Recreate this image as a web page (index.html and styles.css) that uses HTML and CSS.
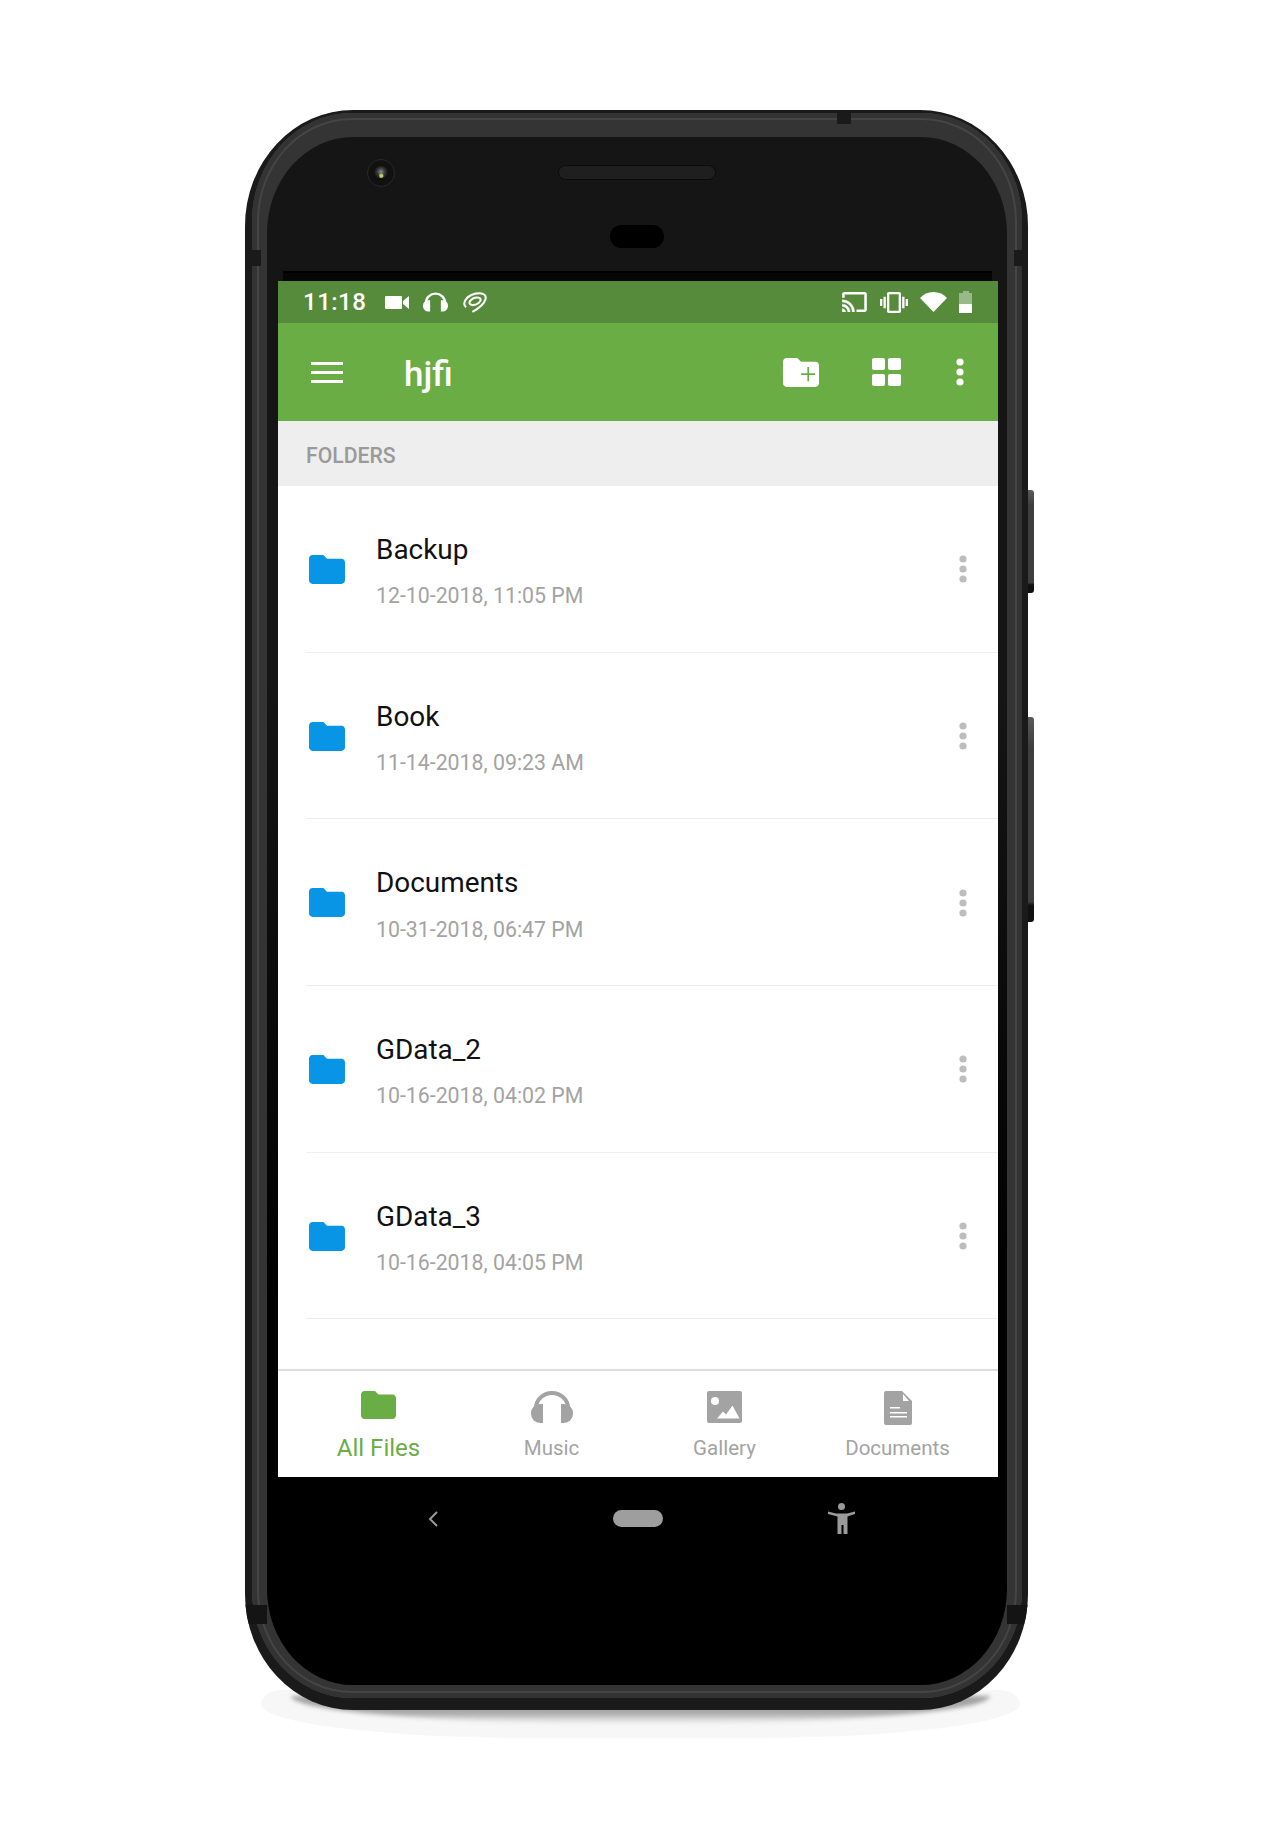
FILE: index.html
```html
<!DOCTYPE html>
<html lang="en">
<head>
    <meta charset="UTF-8">
    <title>hjfi</title>
    <link rel="stylesheet" href="styles.css">
</head>
<body>
    <svg class="icon-defs" width="0" height="0">
        <symbol id="folder" viewBox="2 4 20 16">
            <path d="M10 4H4c-1.1 0-2 .9-2 2v12c0 1.1.9 2 2 2h16c1.1 0 2-.9 2-2V8c0-1.1-.9-2-2-2h-8l-2-2z"/>
        </symbol>
        <symbol id="headset" viewBox="0 0 42 32">
            <path d="M5 20v-3a16 15 0 0 1 32 0v3" fill="none" stroke="currentColor" stroke-width="4"/>
            <path d="M12 13v19H9a9 9 0 0 1-9-9v-1a9 9 0 0 1 9-9z"/>
            <path d="M30 13v19h3a9 9 0 0 0 9-9v-1a9 9 0 0 0-9-9z"/>
        </symbol>
        <symbol id="dots" viewBox="0 0 8 28">
            <circle cx="4" cy="4" r="3.6"/>
            <circle cx="4" cy="14" r="3.6"/>
            <circle cx="4" cy="24" r="3.6"/>
        </symbol>
    </svg>

    <div class="device">
        <div class="floor-shadow"></div>
        <div class="side-btn side-btn-power"></div>
        <div class="side-btn side-btn-volume"></div>

        <div class="phone">
            <div class="frame">
                <div class="seam seam-top"></div>
                <div class="seam seam-left"></div>
                <div class="seam seam-right"></div>
                <div class="seam seam-left-low"></div>
                <div class="seam seam-right-low"></div>

                <div class="bezel">
                    <div class="camera"><div class="lens"></div></div>
                    <div class="speaker"></div>
                    <div class="sensor"></div>
                    <div class="screen-edge"></div>

                    <div class="screen">
                        <div class="statusbar">
                            <span class="clock">11:18</span>
                            <svg class="st-video" viewBox="0 0 24 13" width="24" height="13">
                                <rect width="17" height="13" rx="1"/>
                                <path d="M18 5l6-5v13l-6-5z"/>
                            </svg>
                            <svg class="st-headset"><use href="#headset"/></svg>
                            <svg class="st-swirl" viewBox="0 0 24 20" width="25" height="21">
                                <path d="M4 14.500C-1 11 5 3 13 1.500c6-1.100 11 .5 9.500 5.500-1.300 4.500-7 9-12.500 12"/>
                                <path d="M9.500 12.500C4 11 9 5.500 14.500 5.200c4-.2 4.500 3 1.500 5.300-2 1.500-4.500 2.200-6.500 2"/>
                            </svg>
                            <div class="status-right">
                                <svg class="st-cast" viewBox="1 3 22 18" width="25" height="20">
                                    <path d="M21 3H3c-1.100 0-2 .9-2 2v3h2V5h18v14h-7v2h7c1.100 0 2-.9 2-2V5c0-1.100-.9-2-2-2zM1 18v3h3c0-1.660-1.340-3-3-3zm0-4v2c2.760 0 5 2.240 5 5h2c0-3.870-3.130-7-7-7zm0-4v2c4.970 0 9 4.030 9 9h2c0-6.080-4.930-11-11-11z"/>
                                </svg>
                                <svg class="st-vibrate" viewBox="0 3 24 18" width="28" height="21">
                                    <path d="M0 15h2V9H0v6zm3 2h2V7H3v10zm19-8v6h2V9h-2zm-3 8h2V7h-2v10zM16.500 3h-9C6.670 3 6 3.670 6 4.500v15c0 .83.67 1.500 1.500 1.500h9c.83 0 1.500-.67 1.500-1.500v-15c0-.83-.67-1.500-1.500-1.500zM16 19H8V5h8v14z"/>
                                </svg>
                                <svg class="st-wifi" viewBox="0 0 27 20" width="27" height="20">
                                    <path d="M13.500 20L0 6c3.500-4 8-6 13.500-6S23.500 2 27 6z"/>
                                </svg>
                                <div class="battery">
                                    <div class="battery-nub"></div>
                                    <div class="battery-empty"></div>
                                    <div class="battery-level"></div>
                                </div>
                            </div>
                        </div>

                        <div class="toolbar">
                            <div class="hamburger"><span></span><span></span><span></span></div>
                            <div class="title">hjfi</div>
                            <svg class="tb-newfolder" viewBox="2 4 20 16">
                                <use href="#folder" x="2" y="4" width="20" height="16"/>
                                <path d="M16 9v7.800M12.100 12.900h7.800" fill="none" stroke="#6aad45" stroke-width="0.9"/>
                            </svg>
                            <div class="tb-grid"><span></span><span></span><span></span><span></span></div>
                            <svg class="tb-more"><use href="#dots"/></svg>
                        </div>

                        <div class="section-head">FOLDERS</div>

                        <div class="list">
                            <div class="row">
                                <svg class="row-icon"><use href="#folder"/></svg>
                                <div class="row-text">
                                    <div class="row-name">Backup</div>
                                    <div class="row-date">12-10-2018, 11:05 PM</div>
                                </div>
                                <svg class="row-more"><use href="#dots"/></svg>
                            </div>
                            <div class="row">
                                <svg class="row-icon"><use href="#folder"/></svg>
                                <div class="row-text">
                                    <div class="row-name">Book</div>
                                    <div class="row-date">11-14-2018, 09:23 AM</div>
                                </div>
                                <svg class="row-more"><use href="#dots"/></svg>
                            </div>
                            <div class="row">
                                <svg class="row-icon"><use href="#folder"/></svg>
                                <div class="row-text">
                                    <div class="row-name">Documents</div>
                                    <div class="row-date">10-31-2018, 06:47 PM</div>
                                </div>
                                <svg class="row-more"><use href="#dots"/></svg>
                            </div>
                            <div class="row">
                                <svg class="row-icon"><use href="#folder"/></svg>
                                <div class="row-text">
                                    <div class="row-name">GData_2</div>
                                    <div class="row-date">10-16-2018, 04:02 PM</div>
                                </div>
                                <svg class="row-more"><use href="#dots"/></svg>
                            </div>
                            <div class="row">
                                <svg class="row-icon"><use href="#folder"/></svg>
                                <div class="row-text">
                                    <div class="row-name">GData_3</div>
                                    <div class="row-date">10-16-2018, 04:05 PM</div>
                                </div>
                                <svg class="row-more"><use href="#dots"/></svg>
                            </div>
                        </div>

                        <div class="tabs">
                            <div class="tab tab-active">
                                <div class="tab-icon"><svg class="tab-folder"><use href="#folder"/></svg></div>
                                <div class="tab-label">All Files</div>
                            </div>
                            <div class="tab">
                                <div class="tab-icon"><svg class="tab-headset"><use href="#headset"/></svg></div>
                                <div class="tab-label">Music</div>
                            </div>
                            <div class="tab">
                                <div class="tab-icon">
                                    <svg viewBox="0 0 35 32" width="35" height="32">
                                        <rect width="35" height="32" rx="2"/>
                                        <circle cx="8" cy="10" r="4" fill="#fff"/>
                                        <path d="M10 27.500l6-7 3 3 6.500-9 7 13z" fill="#fff"/>
                                    </svg>
                                </div>
                                <div class="tab-label">Gallery</div>
                            </div>
                            <div class="tab">
                                <div class="tab-icon">
                                    <svg viewBox="0 0 28 34" width="28" height="34">
                                        <path d="M2 0h16l10 10v22a2 2 0 0 1-2 2H2a2 2 0 0 1-2-2V2a2 2 0 0 1 2-2z"/>
                                        <path d="M19 3l6 7h-6z" fill="#fff"/>
                                        <path d="M6 16h10v1.500H6zM6 21h17v1.500H6zM6 25h17v1.500H6z" fill="#fff"/>
                                    </svg>
                                </div>
                                <div class="tab-label">Documents</div>
                            </div>
                        </div>
                    </div>

                    <div class="navbar">
                        <svg class="nav-back" viewBox="0 0 10 16" width="10" height="16">
                            <path d="M9 1L2 8l7 7" fill="none" stroke="#9a9a9a" stroke-width="2"/>
                        </svg>
                        <div class="nav-home"></div>
                        <svg class="nav-a11y" viewBox="0 0 27 31" width="27" height="31">
                            <circle cx="13.500" cy="3.500" r="3.500"/>
                            <path d="M0 8.500l8 2h11l8-2v2.500l-7.500 2.500V31h-4v-9h-2v9h-4V13.500L0 11z"/>
                        </svg>
                    </div>
                </div>
            </div>
        </div>
    </div>
</body>
</html>
```

FILE: styles.css
```css
body {
    margin: 0;
    padding: 110px 0 0 245px;
    background-color: #ffffff;
    font-family: Roboto, sans-serif;
}

.icon-defs {
    display: block;
    height: 0;
}

.device {
    position: relative;
    width: 783px;
    height: 1640px;
}

.floor-shadow {
    position: absolute;
    left: 16px;
    right: 8px;
    top: 1580px;
    height: 48px;
    border-radius: 30px 30px 50% 50% / 20px 20px 100% 100%;
    background: #f7f7f7;
}

.floor-shadow::before {
    content: "";
    position: absolute;
    left: 30px;
    right: 30px;
    top: 6px;
    height: 28px;
    border-radius: 50% / 0 0 100% 100%;
    background: linear-gradient(#a0a0a0 0, #a8a8a8 60%, #dedede 85%, #f2f2f2 100%);
    filter: blur(2px);
}

.side-btn {
    position: absolute;
    right: -6px;
    width: 7px;
    background: linear-gradient(#5a5a5a, #3e3e3e 15%, #3e3e3e 90%, #111111 92%);
    border-radius: 0 3px 3px 0;
}

.side-btn-power {
    top: 380px;
    height: 103px;
}

.side-btn-volume {
    top: 607px;
    height: 205px;
}

.phone {
    position: relative;
    height: 1600px;
    box-sizing: border-box;
    padding: 3px 6px 12px 7px;
    background: #1a1a1a;
    border-radius: 108px / 116px;
    overflow: hidden;
}

.frame {
    position: relative;
    height: 100%;
    box-sizing: border-box;
    padding: 24px 15px 13px 15px;
    background: #343434;
    border-radius: 100px / 108px;
    box-shadow: inset 0 0 0 5px #333333, inset 0 0 0 7px #454545;
}

.seam {
    position: absolute;
    background: #1a1a1a;
}

.seam-top {
    left: 585px;
    top: -3px;
    width: 14px;
    height: 14px;
}

.seam-left {
    left: -7px;
    top: 137px;
    width: 16px;
    height: 16px;
}

.seam-right {
    right: -6px;
    top: 137px;
    width: 14px;
    height: 16px;
}

.seam-left-low {
    left: -7px;
    top: 1492px;
    width: 22px;
    height: 19px;
    background: #141414;
}

.seam-right-low {
    right: -6px;
    top: 1492px;
    width: 21px;
    height: 19px;
    background: #141414;
}

.bezel {
    position: relative;
    height: 100%;
    box-sizing: border-box;
    padding: 28px 9px 0 11px;
    background: linear-gradient(#151515 0, #151515 35%, #000000 75%);
    border-radius: 86px / 96px;
}

.camera {
    position: absolute;
    left: 100px;
    top: 22px;
    width: 28px;
    height: 28px;
    box-sizing: border-box;
    padding: 6px;
    border-radius: 50%;
    background: #111111;
    border: 1px solid #2a2a2a;
}

.lens {
    height: 100%;
    border-radius: 50%;
    background: radial-gradient(circle at 52% 70%, #b5d06a 0, #b5d06a 12%, transparent 22%),
        radial-gradient(circle at 50% 42%, #8a8a8a 0, #3a3a3a 35%, #080808 75%);
}

.speaker {
    width: 158px;
    height: 15px;
    margin-left: 280px;
    box-sizing: border-box;
    border: 1px solid #0a0a0a;
    border-radius: 8px;
    background: #1f1f1f;
}

.sensor {
    width: 54px;
    height: 23px;
    margin: 45px 0 0 332px;
    border-radius: 12px;
    background: #000000;
}

.screen-edge {
    height: 10px;
    margin: 23px 6px 0 5px;
    background: #060606;
    border-top: 2px solid #000000;
    box-sizing: border-box;
}

.screen {
    width: 720px;
    background: #ffffff;
}

.statusbar {
    height: 42px;
    display: flex;
    align-items: center;
    padding: 0 26px 0 25px;
    background: #558b3b;
    color: #ffffff;
    fill: #ffffff;
}

.clock {
    font-size: 24px;
    font-weight: 500;
    letter-spacing: 0.5px;
}

.st-video {
    margin-left: 19px;
}

.st-headset {
    width: 25px;
    height: 20px;
    margin-left: 14px;
    color: #ffffff;
}

.st-swirl {
    margin-left: 14px;
    fill: none;
    stroke: #ffffff;
    stroke-width: 2;
}

.status-right {
    margin-left: auto;
    display: flex;
    align-items: center;
}

.st-cast path {
    stroke: #ffffff;
    stroke-width: 0.4;
}

.st-vibrate {
    margin-left: 13px;
}

.st-wifi {
    margin-left: 12px;
}

.battery {
    width: 13px;
    margin-left: 12px;
    display: flex;
    flex-direction: column;
    align-items: center;
}

.battery-nub {
    width: 6px;
    height: 2px;
    background: rgba(255, 255, 255, 0.4);
}

.battery-empty {
    width: 13px;
    height: 11px;
    background: rgba(255, 255, 255, 0.4);
}

.battery-level {
    width: 13px;
    height: 9px;
    background: #ffffff;
}

.toolbar {
    height: 98px;
    display: flex;
    align-items: center;
    padding: 0 34px 0 33px;
    box-sizing: border-box;
    background: #6aad45;
    fill: #ffffff;
}

.hamburger {
    display: flex;
    flex-direction: column;
    gap: 6px;
}

.hamburger span {
    display: block;
    width: 32px;
    height: 3px;
    background: #ffffff;
}

.title {
    margin: 4px 0 0 61px;
    color: #ffffff;
    font-size: 35px;
    font-weight: 500;
}

.tb-newfolder {
    width: 36px;
    height: 29px;
    margin-left: auto;
}

.tb-grid {
    width: 29px;
    margin-left: 53px;
    display: grid;
    grid-template-columns: 12.5px 12.5px;
    gap: 3.5px;
}

.tb-grid span {
    height: 12.5px;
    border-radius: 2px;
    background: #ffffff;
}

.tb-more {
    width: 8px;
    height: 28px;
    margin-left: 55px;
}

.section-head {
    height: 65px;
    display: flex;
    align-items: center;
    padding: 3px 0 0 28px;
    box-sizing: border-box;
    background: #eeeeee;
    color: #9a9a9a;
    font-size: 21.2px;
    font-weight: 500;
}

.list {
    height: 883px;
    overflow: hidden;
}

.row {
    height: 166.7px;
    display: flex;
    align-items: center;
    padding-left: 31px;
    padding-right: 31px;
    box-sizing: border-box;
    position: relative;
}

.row::after {
    content: "";
    position: absolute;
    left: 28px;
    right: 0;
    bottom: 0;
    height: 1px;
    background: #f1ecee;
}

.row-icon {
    width: 36px;
    height: 29px;
    fill: #0895e6;
}

.row-text {
    margin: 2.5px 0 0 31px;
}

.row-name {
    color: #111111;
    font-size: 27.9px;
}

.row-date {
    margin-top: 17.5px;
    color: #a3a3a3;
    font-size: 21.3px;
}

.row-more {
    width: 8px;
    height: 28px;
    margin-left: auto;
    fill: #bdbdbd;
}

.tabs {
    height: 108px;
    display: flex;
    padding: 20px 14px 0;
    box-sizing: border-box;
    border-top: 2px solid #dddddd;
    background: #ffffff;
}

.tab {
    width: 173px;
    text-align: center;
    color: #a3a3a3;
    fill: #a3a3a3;
}

.tab-active {
    color: #6aad45;
    fill: #6aad45;
}

.tab-icon {
    height: 36px;
}

.tab-folder {
    width: 35px;
    height: 28px;
}

.tab-headset {
    width: 42px;
    height: 32px;
    color: #a3a3a3;
}

.tab-label {
    margin-top: 9px;
    font-size: 20.5px;
}

.tab-active .tab-label {
    margin-top: 7px;
    font-size: 24px;
}

.navbar {
    height: 83px;
    display: flex;
    align-items: center;
    fill: #9a9a9a;
}

.nav-back {
    margin-left: 150px;
}

.nav-home {
    width: 50px;
    height: 17px;
    margin-left: 175px;
    border-radius: 9px;
    background: #9e9e9e;
}

.nav-a11y {
    margin-left: 165px;
}
```
